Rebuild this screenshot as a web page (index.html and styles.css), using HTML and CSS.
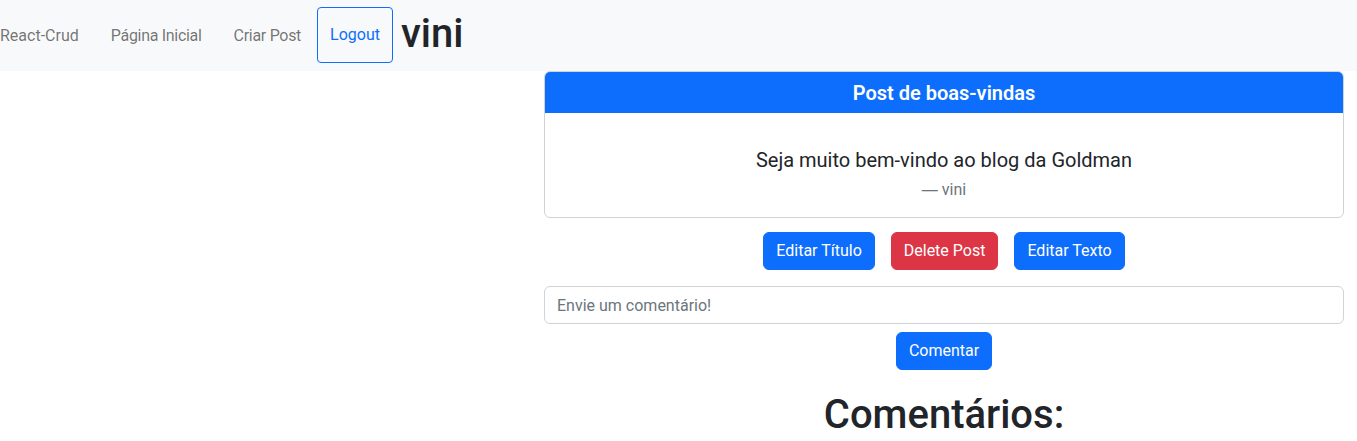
FILE: index.html
```html
<!DOCTYPE html>
<html lang="pt-BR">
<head>
<meta charset="utf-8">
<title>React-Crud</title>
<link rel="stylesheet" href="styles.css">
</head>
<body>
<nav class="navbar">
  <a class="brand" href="#">React-Crud</a>
  <a class="nav-link" href="#">Página Inicial</a>
  <a class="nav-link" href="#">Criar Post</a>
  <a class="logout" href="#">Logout</a>
  <h1 class="user">vini</h1>
</nav>
<main class="main">
  <section class="card">
    <div class="card-header">Post de boas-vindas</div>
    <div class="card-body">
      <p class="quote">Seja muito bem-vindo ao blog da Goldman</p>
      <div class="quote-footer"><span class="dash">—</span> vini</div>
    </div>
  </section>
  <div class="actions">
    <button class="btn btn-primary">Editar Título</button>
    <button class="btn btn-danger">Delete Post</button>
    <button class="btn btn-primary">Editar Texto</button>
  </div>
  <input class="comment-input" type="text" placeholder="Envie um comentário!">
  <div class="comment-action">
    <button class="btn btn-primary">Comentar</button>
  </div>
  <h1 class="comments-title">Comentários:</h1>
</main>
</body>
</html>
```
FILE: styles.css
```css
* { box-sizing: border-box; }
body {
  margin: 0;
  font-family: Roboto, "Liberation Sans", sans-serif;
  font-size: 16px;
  line-height: 1.5;
  color: #212529;
  background: #fff;
}
.navbar {
  display: flex;
  align-items: center;
  height: 71px;
  background: #f8f9fa;
}
.brand {
  color: rgba(0, 0, 0, 0.55);
  text-decoration: none;
  margin-right: 16px;
}
.nav-link {
  color: rgba(0, 0, 0, 0.55);
  text-decoration: none;
  padding: 0 16px;
  letter-spacing: -0.3px;
}
.logout {
  display: flex;
  align-items: center;
  height: 56px;
  margin-top: -1px;
  padding: 0 12px;
  border: 1px solid #0d6efd;
  border-radius: 4px;
  color: #0d6efd;
  text-decoration: none;
}
.user {
  margin: 0 0 4px 8px;
  font-size: 40px;
  font-weight: 500;
  line-height: 48px;
  color: #212529;
}
.main {
  width: 800px;
  margin-left: 544px;
}
.card {
  border: 1px solid rgba(0, 0, 0, 0.175);
  border-radius: 6px;
  overflow: hidden;
}
.card-header {
  height: 41px;
  display: flex;
  align-items: center;
  justify-content: center;
  background: #0d6efd;
  color: #fff;
  font-size: 20px;
  font-weight: 600;
}
.card-body {
  padding: 32px 16px 15px;
  text-align: center;
}
.quote {
  margin: 0 0 3px;
  font-size: 20px;
  line-height: 30px;
}
.quote-footer {
  color: #6c757d;
  font-size: 16px;
  line-height: 24px;
}
.dash {
  font-family: "Liberation Sans", sans-serif;
}
.actions {
  display: flex;
  justify-content: center;
  gap: 16px;
  margin-top: 14px;
}
.btn {
  font-family: inherit;
  font-size: 16px;
  line-height: 24px;
  padding: 6px 12px;
  border: 1px solid transparent;
  border-radius: 6px;
  color: #fff;
  cursor: pointer;
}
.btn-primary { background: #0d6efd; border-color: #0d6efd; }
.btn-danger { background: #dc3545; border-color: #dc3545; }
.comment-input {
  display: block;
  width: 100%;
  height: 38px;
  margin-top: 16px;
  padding: 6px 12px;
  font-family: inherit;
  font-size: 16px;
  color: #212529;
  border: 1px solid #ced4da;
  border-radius: 6px;
}
.comment-input::placeholder { color: #6c757d; }
.comment-action {
  display: flex;
  justify-content: center;
  margin-top: 8px;
}
.comments-title {
  margin: 21px 0 0;
  text-align: center;
  font-size: 40px;
  font-weight: 500;
  line-height: 48px;
}
```
